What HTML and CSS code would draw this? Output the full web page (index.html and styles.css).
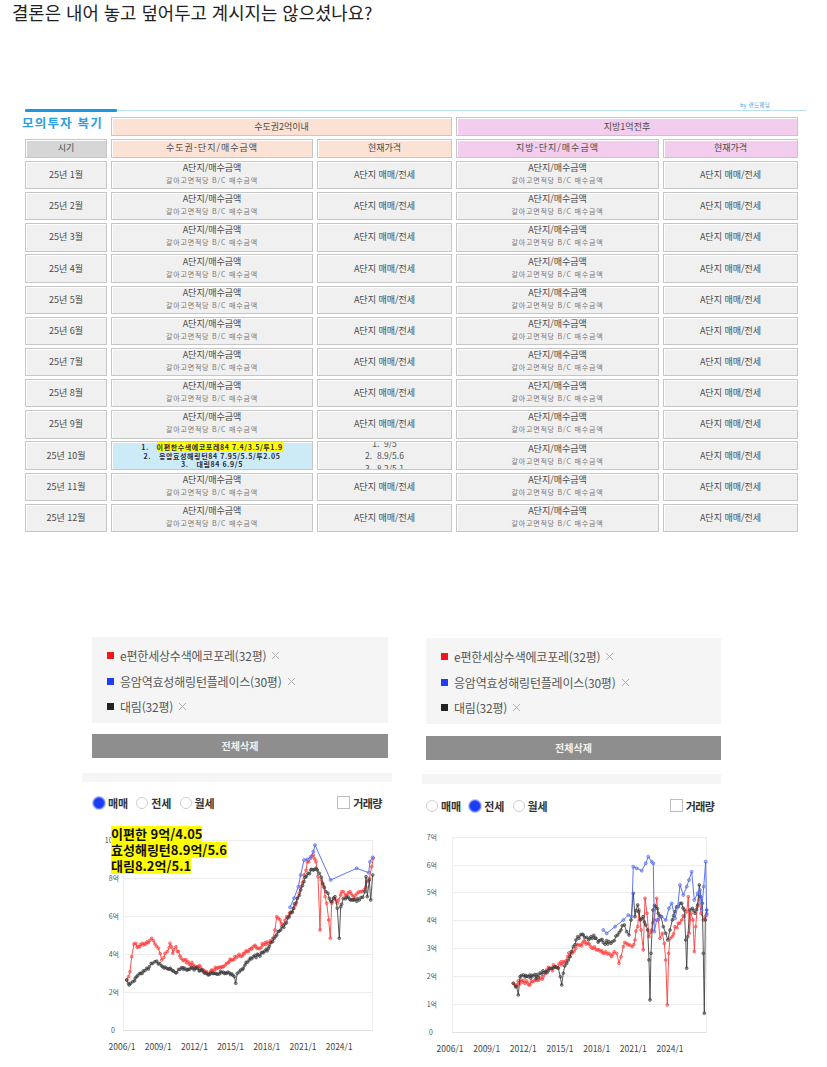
FILE: index.html
```html
<!DOCTYPE html>
<html lang="ko">
<head>
<meta charset="utf-8">
<title>모의투자 복기</title>
<link rel="stylesheet" href="styles.css">
</head>
<body>
<h1 class="title">결론은 내어 놓고 덮어두고 계시지는 않으셨나요?</h1>

<section class="sheet">
  <div class="sheet-top">
    <div class="credit">by 랜드웨딩</div>
    <div class="track"><span class="track-fill"></span><span class="track-rest"></span></div>
  </div>
  <div class="grid">
    <div class="sheet-label">모의투자 복기</div>
    <div class="cell head-a span2">수도권2억이내</div>
    <div class="cell head-b span2">지방1억전후</div>

    <div class="cell head-g">시기</div>
    <div class="cell head-a wide">수도권-단지/매수금액</div>
    <div class="cell head-a">현재가격</div>
    <div class="cell head-b wide">지방-단지/매수금액</div>
    <div class="cell head-b">현재가격</div>

    <div class="cell">25년 1월</div>
    <div class="cell pair"><span class="main">A단지/매수금액</span><span class="sub">갈아고면적당 B/C 매수금액</span></div>
    <div class="cell">A단지 매매/전세</div>
    <div class="cell pair"><span class="main">A단지/매수금액</span><span class="sub">갈아고면적당 B/C 매수금액</span></div>
    <div class="cell">A단지 매매/전세</div>

    <div class="cell">25년 2월</div>
    <div class="cell pair"><span class="main">A단지/매수금액</span><span class="sub">갈아고면적당 B/C 매수금액</span></div>
    <div class="cell">A단지 매매/전세</div>
    <div class="cell pair"><span class="main">A단지/매수금액</span><span class="sub">갈아고면적당 B/C 매수금액</span></div>
    <div class="cell">A단지 매매/전세</div>

    <div class="cell">25년 3월</div>
    <div class="cell pair"><span class="main">A단지/매수금액</span><span class="sub">갈아고면적당 B/C 매수금액</span></div>
    <div class="cell">A단지 매매/전세</div>
    <div class="cell pair"><span class="main">A단지/매수금액</span><span class="sub">갈아고면적당 B/C 매수금액</span></div>
    <div class="cell">A단지 매매/전세</div>

    <div class="cell">25년 4월</div>
    <div class="cell pair"><span class="main">A단지/매수금액</span><span class="sub">갈아고면적당 B/C 매수금액</span></div>
    <div class="cell">A단지 매매/전세</div>
    <div class="cell pair"><span class="main">A단지/매수금액</span><span class="sub">갈아고면적당 B/C 매수금액</span></div>
    <div class="cell">A단지 매매/전세</div>

    <div class="cell">25년 5월</div>
    <div class="cell pair"><span class="main">A단지/매수금액</span><span class="sub">갈아고면적당 B/C 매수금액</span></div>
    <div class="cell">A단지 매매/전세</div>
    <div class="cell pair"><span class="main">A단지/매수금액</span><span class="sub">갈아고면적당 B/C 매수금액</span></div>
    <div class="cell">A단지 매매/전세</div>

    <div class="cell">25년 6월</div>
    <div class="cell pair"><span class="main">A단지/매수금액</span><span class="sub">갈아고면적당 B/C 매수금액</span></div>
    <div class="cell">A단지 매매/전세</div>
    <div class="cell pair"><span class="main">A단지/매수금액</span><span class="sub">갈아고면적당 B/C 매수금액</span></div>
    <div class="cell">A단지 매매/전세</div>

    <div class="cell">25년 7월</div>
    <div class="cell pair"><span class="main">A단지/매수금액</span><span class="sub">갈아고면적당 B/C 매수금액</span></div>
    <div class="cell">A단지 매매/전세</div>
    <div class="cell pair"><span class="main">A단지/매수금액</span><span class="sub">갈아고면적당 B/C 매수금액</span></div>
    <div class="cell">A단지 매매/전세</div>

    <div class="cell">25년 8월</div>
    <div class="cell pair"><span class="main">A단지/매수금액</span><span class="sub">갈아고면적당 B/C 매수금액</span></div>
    <div class="cell">A단지 매매/전세</div>
    <div class="cell pair"><span class="main">A단지/매수금액</span><span class="sub">갈아고면적당 B/C 매수금액</span></div>
    <div class="cell">A단지 매매/전세</div>

    <div class="cell">25년 9월</div>
    <div class="cell pair"><span class="main">A단지/매수금액</span><span class="sub">갈아고면적당 B/C 매수금액</span></div>
    <div class="cell">A단지 매매/전세</div>
    <div class="cell pair"><span class="main">A단지/매수금액</span><span class="sub">갈아고면적당 B/C 매수금액</span></div>
    <div class="cell">A단지 매매/전세</div>

    <div class="cell">25년 10월</div>
    <div class="cell picked">
      <span class="pick-line">1.&nbsp;&nbsp;&nbsp;<mark>이편한수색에코포레84 7.4/3.5/투1.9</mark></span>
      <span class="pick-line">2.&nbsp;&nbsp;&nbsp;응암효성해링턴84 7.95/5.5/투2.05</span>
      <span class="pick-line">3.&nbsp;&nbsp;&nbsp;대림84 6.9/5</span>
    </div>
    <div class="cell prices">
      <span>1.&nbsp;&nbsp;9/5</span>
      <span>2.&nbsp;&nbsp;8.9/5.6</span>
      <span>3.&nbsp;&nbsp;8.2/5.1</span>
    </div>
    <div class="cell pair"><span class="main">A단지/매수금액</span><span class="sub">갈아고면적당 B/C 매수금액</span></div>
    <div class="cell">A단지 매매/전세</div>

    <div class="cell">25년 11월</div>
    <div class="cell pair"><span class="main">A단지/매수금액</span><span class="sub">갈아고면적당 B/C 매수금액</span></div>
    <div class="cell">A단지 매매/전세</div>
    <div class="cell pair"><span class="main">A단지/매수금액</span><span class="sub">갈아고면적당 B/C 매수금액</span></div>
    <div class="cell">A단지 매매/전세</div>

    <div class="cell">25년 12월</div>
    <div class="cell pair"><span class="main">A단지/매수금액</span><span class="sub">갈아고면적당 B/C 매수금액</span></div>
    <div class="cell">A단지 매매/전세</div>
    <div class="cell pair"><span class="main">A단지/매수금액</span><span class="sub">갈아고면적당 B/C 매수금액</span></div>
    <div class="cell">A단지 매매/전세</div>
  </div>
</section>

<section class="charts">
  <div class="panel panel-left">
    <div class="legend">
      <div class="legend-item"><span class="swatch red"></span>e편한세상수색에코포레(32평)<svg class="x" viewBox="0 0 9 9"><path d="M1 1L8 8M8 1L1 8"/></svg></div>
      <div class="legend-item"><span class="swatch blue"></span>응암역효성해링턴플레이스(30평)<svg class="x" viewBox="0 0 9 9"><path d="M1 1L8 8M8 1L1 8"/></svg></div>
      <div class="legend-item"><span class="swatch black"></span>대림(32평)<svg class="x" viewBox="0 0 9 9"><path d="M1 1L8 8M8 1L1 8"/></svg></div>
    </div>
    <button class="clear" type="button">전체삭제</button>
    <div class="strip"></div>
    <div class="options">
      <span class="opt"><span class="radio on"></span>매매</span>
      <span class="opt"><span class="radio"></span>전세</span>
      <span class="opt"><span class="radio"></span>월세</span>
      <span class="opt check"><span class="box"></span>거래량</span>
    </div>
    <div class="chart">
      <svg class="plot" id="plot-sale" width="310" height="244" viewBox="0 0 310 244">
        <g class="gridlines">
          <line x1="41" y1="22.5" x2="291" y2="22.5"/>
          <line x1="41" y1="60.5" x2="291" y2="60.5"/>
          <line x1="41" y1="98.5" x2="291" y2="98.5"/>
          <line x1="41" y1="136.5" x2="291" y2="136.5"/>
          <line x1="41" y1="174.5" x2="291" y2="174.5"/>
          <line x1="41.5" y1="22" x2="41.5" y2="212"/>
          <line x1="290.5" y1="22" x2="290.5" y2="212"/>
        </g>
        <line class="axis" x1="41" y1="212.5" x2="291" y2="212.5"/>
        <g class="ylab">
          <text x="37" y="24.5">10억</text>
          <text x="37" y="62.5">8억</text>
          <text x="37" y="100.5">6억</text>
          <text x="37" y="138.5">4억</text>
          <text x="37" y="176.5">2억</text>
          <text x="33" y="214.5">0</text>
        </g>
        <g class="xlab">
          <text x="40" y="232">2006/1</text>
          <text x="76.2" y="232">2009/1</text>
          <text x="112.4" y="232">2012/1</text>
          <text x="148.6" y="232">2015/1</text>
          <text x="184.8" y="232">2018/1</text>
          <text x="221" y="232">2021/1</text>
          <text x="257.2" y="232">2024/1</text>
        </g>
        <g class="series"></g>
      </svg>
      <div class="note">
        <span class="note-line"><span class="typo">이편한</span> 9억/4.05</span>
        <span class="note-line"><span class="typo">효성해링턴</span>8.9억/5.6</span>
        <span class="note-line">대림8.2억/5.1</span>
      </div>
    </div>
  </div>

  <div class="panel panel-right">
    <div class="legend">
      <div class="legend-item"><span class="swatch red"></span>e편한세상수색에코포레(32평)<svg class="x" viewBox="0 0 9 9"><path d="M1 1L8 8M8 1L1 8"/></svg></div>
      <div class="legend-item"><span class="swatch blue"></span>응암역효성해링턴플레이스(30평)<svg class="x" viewBox="0 0 9 9"><path d="M1 1L8 8M8 1L1 8"/></svg></div>
      <div class="legend-item"><span class="swatch black"></span>대림(32평)<svg class="x" viewBox="0 0 9 9"><path d="M1 1L8 8M8 1L1 8"/></svg></div>
    </div>
    <button class="clear" type="button">전체삭제</button>
    <div class="strip"></div>
    <div class="options">
      <span class="opt"><span class="radio"></span>매매</span>
      <span class="opt"><span class="radio on"></span>전세</span>
      <span class="opt"><span class="radio"></span>월세</span>
      <span class="opt check"><span class="box"></span>거래량</span>
    </div>
    <div class="chart">
      <svg class="plot" id="plot-rent" width="300" height="244" viewBox="0 0 300 244">
        <g class="gridlines">
          <line x1="31" y1="19.5" x2="286" y2="19.5"/>
          <line x1="31" y1="47.5" x2="286" y2="47.5"/>
          <line x1="31" y1="74.5" x2="286" y2="74.5"/>
          <line x1="31" y1="102.5" x2="286" y2="102.5"/>
          <line x1="31" y1="130.5" x2="286" y2="130.5"/>
          <line x1="31" y1="158.5" x2="286" y2="158.5"/>
          <line x1="31" y1="186.5" x2="286" y2="186.5"/>
          <line x1="31.5" y1="19" x2="31.5" y2="214"/>
          <line x1="285.5" y1="19" x2="285.5" y2="214"/>
        </g>
        <line class="axis" x1="31" y1="214.5" x2="286" y2="214.5"/>
        <g class="ylab">
          <text x="16" y="21.5">7억</text>
          <text x="16" y="49.5">6억</text>
          <text x="16" y="77">5억</text>
          <text x="16" y="105">4억</text>
          <text x="16" y="133">3억</text>
          <text x="16" y="160.5">2억</text>
          <text x="16" y="188.5">1억</text>
          <text x="12" y="216.5">0</text>
        </g>
        <g class="xlab">
          <text x="29" y="234">2006/1</text>
          <text x="65.7" y="234">2009/1</text>
          <text x="102.3" y="234">2012/1</text>
          <text x="139" y="234">2015/1</text>
          <text x="175.7" y="234">2018/1</text>
          <text x="212.3" y="234">2021/1</text>
          <text x="249" y="234">2024/1</text>
        </g>
        <g class="series"></g>
      </svg>
    </div>
  </div>
</section>

<script src="chart.js"></script>
</body>
</html>
```

FILE: styles.css
```css
* { box-sizing: border-box; }
html, body { margin: 0; padding: 0; }
body {
  width: 827px;
  height: 1067px;
  overflow: hidden;
  background: #fff;
  color: #333;
  font-family: "Noto Sans CJK KR", "Noto Sans", sans-serif;
}

.title {
  margin: 0;
  padding: 0 0 0 12px;
  font-size: 17.8px;
  font-weight: 400;
  line-height: 25px;
  color: #222;
}

/* ---------- sheet ---------- */
.sheet { margin-top: 77px; }
.sheet-top { width: 806px; padding-left: 25px; }
.credit {
  height: 7px;
  padding-right: 36px;
  text-align: right;
  font-size: 5.5px;
  line-height: 7px;
  letter-spacing: 0.3px;
  color: #3a9de0;
}
.track { display: flex; align-items: center; height: 3px; }
.track-fill { width: 92px; height: 3px; background: #1b98de; border-radius: 1px; }
.track-rest { flex: 1; height: 1.5px; background: #b9e3f7; }

.grid {
  display: grid;
  grid-template-columns: 82px 202px 135px 203px 135px;
  grid-template-rows: 19px 19.2px repeat(12, 28.4px);
  column-gap: 4px;
  row-gap: 2.8px;
  width: 773px;
  margin: 5px 0 0 25px;
}
.sheet-label {
  margin: -1px 0 0 -3px;
  font-size: 12.5px;
  font-weight: 700;
  line-height: 14px;
  letter-spacing: 1.2px;
  color: #2b9fe0;
  white-space: nowrap;
}
.cell {
  display: flex;
  flex-direction: column;
  align-items: center;
  justify-content: center;
  overflow: hidden;
  background: #f0f0f0;
  border: 1px solid #c6c6c6;
  box-shadow: inset 1px 1px 0 #fff;
  font-size: 9px;
  line-height: 12px;
  color: #4a4a4a;
  text-align: center;
  white-space: nowrap;
}
.span2 { grid-column: span 2; }
.head-a { background: #fce2d4; }
.head-b { background: #f2cdee; }
.head-g { background: #d6d6d6; }
.wide { letter-spacing: 1px; }

.pair { padding-bottom: 4px; }
.main { line-height: 12px; }
.sub {
  margin-top: 2px;
  font-size: 7px;
  line-height: 8px;
  letter-spacing: 0.8px;
  color: #777;
}

.picked { background: #cdeaf7; }
.pick-line {
  font-size: 7px;
  line-height: 8.3px;
  font-weight: 700;
  letter-spacing: 0.6px;
  color: #2a2a3a;
}
.pick-line mark { background: #ffff00; color: inherit; }

.prices {
  font-size: 8.5px;
  line-height: 12.5px;
  color: #555;
}

/* ---------- charts ---------- */
.charts { display: flex; align-items: flex-start; margin-top: 104.6px; }
.panel { display: flex; flex-direction: column; }
.panel-left { width: 310px; margin-left: 82px; }
.panel-right { width: 300px; margin-left: 29px; margin-top: 1px; }

.legend { height: 86px; padding: 6px 0 0 15px; background: #f5f5f5; }
.panel-left .legend, .panel-left .clear { width: 296px; margin-left: 10px; }
.panel-right .legend, .panel-right .clear { width: 295px; margin-left: 5px; }
.legend-item {
  display: flex;
  align-items: center;
  height: 25.5px;
  font-size: 12px;
  letter-spacing: -0.2px;
  color: #555;
  white-space: nowrap;
}
.swatch { flex: none; width: 7px; height: 7px; margin-right: 6px; }
.swatch.red { background: #f4141e; }
.swatch.blue { background: #1f3df2; }
.swatch.black { background: #232323; }
.x { flex: none; width: 9px; height: 9px; margin-left: 5px; fill: none; stroke: #b0b0b0; stroke-width: 1; }

.clear {
  display: block;
  height: 24px;
  margin-top: 11px;
  padding: 0;
  border: 0;
  background: #8e8e8e;
  color: #f2f2f2;
  font: 700 10px/24px "Noto Sans CJK KR", "Noto Sans", sans-serif;
}
.panel-right .clear { margin-top: 12px; }

.strip { height: 9px; margin-top: 15px; background: #f5f5f5; }
.panel-right .strip { height: 10px; margin-top: 14px; margin-left: 1px; }

.options {
  display: flex;
  align-items: center;
  height: 16px;
  margin-top: 13px;
  padding: 0 10px 0 11px;
  font-size: 11px;
  font-weight: 700;
  color: #333;
}
.panel-right .options { margin-top: 14px; padding: 0 6.5px 0 5px; }
.opt { display: flex; align-items: center; margin-right: 8px; white-space: nowrap; }
.opt.check { margin: 0 0 0 auto; letter-spacing: -0.5px; }
.radio {
  width: 12px;
  height: 12px;
  margin-right: 3px;
  border: 1px solid #cfcfcf;
  border-radius: 50%;
  background: #fff;
}
.radio.on { background: #1a3cf5; border-color: #5a72f6; box-shadow: 0 0 0 1px #b5c1fa; }
.box { width: 13px; height: 13px; margin-right: 3px; border: 1px solid #bdbdbd; background: #fff; }

.chart { position: relative; height: 244px; margin-top: 7px; }
.panel-right .chart { margin-top: 4px; }
.plot { display: block; }
.gridlines line { stroke: #ededed; stroke-width: 1; }
.axis { stroke: #e2e2e2; stroke-width: 1; }
.plot text { font-family: "Noto Sans CJK KR", "Noto Sans", sans-serif; fill: #555; }
.ylab text { font-size: 7px; text-anchor: end; }
.xlab text { font-size: 8.5px; text-anchor: middle; fill: #444; }

.line { fill: none; stroke-width: 1; stroke-linejoin: round; }
.line.red { stroke: #ff3434; stroke-opacity: 0.85; }
.line.black { stroke: #3a3a3a; stroke-opacity: 0.85; }
.line.blue { stroke: #4a66f2; stroke-opacity: 0.9; }
.dot { stroke-width: 0.6; fill-opacity: 0.5; }
.dot.red { fill: #ff5a5a; stroke: #ff3434; }
.dot.black { fill: #555; stroke: #333; }
.dot.blue { fill: #6d85f5; stroke: #4a66f2; }

.note {
  position: absolute;
  left: 29px;
  top: 8px;
  display: flex;
  flex-direction: column;
  align-items: flex-start;
}
.note-line {
  background: #ffff00;
  font-size: 13px;
  font-weight: 700;
  line-height: 16px;
  color: #111;
  white-space: nowrap;
}
.typo { text-decoration: underline wavy #e0602a; text-decoration-thickness: 1px; text-underline-offset: 2px; }
```

FILE: chart.js
```js
(function () {
  var NS = 'http://www.w3.org/2000/svg';

  function makeRand(seed) {
    return function () {
      seed = (seed + 0x6D2B79F5) | 0;
      var t = Math.imul(seed ^ (seed >>> 15), 1 | seed);
      t = (t + Math.imul(t ^ (t >>> 7), 61 | t)) ^ t;
      return ((t ^ (t >>> 14)) >>> 0) / 4294967296;
    };
  }

  // keys are sample points in 1/3-pixel units; off shifts them into the svg
  function densify(keys, off, step, noise, rand) {
    var pts = [];
    for (var i = 0; i < keys.length; i++) {
      var a = [keys[i][0] / 3 + off[0], keys[i][1] / 3 + off[1]];
      pts.push(a);
      if (i === keys.length - 1 || !step) continue;
      var b = [keys[i + 1][0] / 3 + off[0], keys[i + 1][1] / 3 + off[1]];
      var n = Math.floor((b[0] - a[0]) / step);
      for (var j = 1; j < n; j++) {
        var t = j / n;
        pts.push([
          a[0] + (b[0] - a[0]) * t + (rand() - 0.5) * step * 0.8,
          a[1] + (b[1] - a[1]) * t + (rand() - 0.5) * noise
        ]);
      }
    }
    return pts;
  }

  function draw(id, off, list) {
    var svg = document.getElementById(id);
    if (!svg) return;
    var g = svg.querySelector('.series');
    list.forEach(function (s, k) {
      var rand = makeRand(17 + k * 31 + id.length * 7);
      var pts = densify(s.keys, off, s.step, s.noise, rand);
      var line = document.createElementNS(NS, 'polyline');
      line.setAttribute('points', pts.map(function (p) {
        return p[0].toFixed(1) + ',' + p[1].toFixed(1);
      }).join(' '));
      line.setAttribute('class', 'line ' + s.cls);
      g.appendChild(line);
      pts.forEach(function (p) {
        var c = document.createElementNS(NS, 'circle');
        c.setAttribute('cx', p[0].toFixed(1));
        c.setAttribute('cy', p[1].toFixed(1));
        c.setAttribute('r', s.r || 1.4);
        c.setAttribute('class', 'dot ' + s.cls);
        g.appendChild(c);
      });
    });
  }

  var saleRed = [[140,480],[150,455],[155,410],[162,372],[175,380],[190,375],[205,368],[215,355],[225,372],[235,385],[245,420],[255,400],[262,395],[270,370],[278,400],[288,380],[300,408],[312,420],[325,425],[340,435],[355,440],[370,450],[382,462],[395,450],[410,445],[425,440],[440,430],[455,420],[470,412],[490,400],[505,395],[520,380],[535,385],[550,375],[565,370],[578,355],[585,330],[590,290],[600,300],[610,315],[620,290],[632,280],[642,265],[652,235],[662,200],[672,165],[682,125],[692,115],[700,105],[708,125],[714,170],[720,330],[724,180],[732,200],[740,250],[746,300],[751,355],[755,250],[762,235],[772,250],[782,225],[790,215],[800,225],[810,215],[822,240],[832,220],[842,215],[852,210],[860,185],[868,175],[875,140],[880,115]];
  var saleBlack = [[140,480],[148,495],[158,485],[170,470],[182,460],[195,452],[208,440],[218,430],[225,425],[235,432],[248,440],[260,445],[275,450],[290,458],[300,448],[315,445],[330,447],[345,445],[360,452],[372,458],[385,465],[398,460],[410,462],[425,458],[440,460],[455,462],[463,470],[467,490],[472,460],[482,450],[495,435],[508,420],[520,410],[535,405],[550,398],[565,385],[578,365],[590,345],[602,330],[615,312],[628,290],[640,265],[652,235],[662,210],[672,185],[684,160],[695,148],[708,145],[718,160],[728,190],[738,215],[748,235],[756,245],[765,230],[772,265],[778,355],[782,260],[790,235],[800,232],[812,240],[825,238],[838,240],[848,232],[855,215],[858,170],[862,230],[868,180],[872,240],[878,165]];
  var saleBlue = [[630,262],[642,235],[655,200],[662,165],[672,120],[682,118],[692,110],[700,95],[705,75],[752,180],[830,145],[866,158],[870,125],[878,112]];

  var rentBlack = [[295,490],[305,500],[310,525],[315,470],[325,465],[340,470],[355,468],[370,472],[380,462],[392,455],[400,452],[410,445],[420,440],[430,445],[436,470],[440,495],[445,460],[455,430],[465,410],[475,380],[483,360],[492,355],[505,345],[515,352],[528,350],[540,355],[552,362],[565,368],[578,372],[588,370],[598,362],[608,345],[618,330],[628,315],[635,335],[642,345],[648,300],[655,220],[660,290],[668,255],[676,300],[684,290],[692,315],[698,330],[702,420],[705,540],[708,400],[714,270],[722,260],[730,280],[738,290],[745,320],[752,340],[758,360],[765,330],[772,300],[780,275],[790,260],[800,250],[808,270],[812,360],[815,445],[818,350],[825,270],[832,265],[840,280],[848,255],[853,195],[857,230],[862,250],[865,400],[868,580],[871,300],[875,270]];
  var rentRed = [[295,490],[305,495],[318,480],[330,490],[345,495],[358,482],[372,480],[385,470],[395,450],[408,445],[420,440],[432,432],[445,425],[458,410],[470,400],[482,385],[495,375],[510,365],[522,372],[535,385],[548,390],[560,392],[572,395],[582,400],[590,410],[598,395],[605,400],[612,430],[618,410],[625,380],[635,370],[645,375],[652,380],[660,360],[668,320],[672,270],[678,330],[685,390],[690,235],[696,280],[702,350],[710,330],[718,300],[725,235],[730,300],[735,355],[742,340],[748,370],[752,420],[757,555],[761,400],[765,355],[772,350],[780,320],[790,310],[800,300],[808,290],[815,275],[820,230],[823,340],[828,280],[834,300],[838,395],[842,320],[847,260],[852,225],[858,280],[865,300],[870,290],[875,280]];
  var rentBlue = [[565,330],[575,340],[600,320],[625,300],[640,285],[650,290],[655,140],[665,145],[680,152],[692,130],[700,110],[710,125],[715,130],[718,335],[725,300],[740,290],[752,300],[762,265],[770,250],[780,295],[788,260],[795,195],[805,225],[815,200],[822,180],[830,155],[838,240],[848,220],[855,210],[860,270],[866,200],[872,125],[875,285]];

  draw('plot-sale', [-2, 2], [
    { cls: 'red', keys: saleRed, step: 1.2, noise: 4 },
    { cls: 'black', keys: saleBlack, step: 1.2, noise: 3.5 },
    { cls: 'blue', keys: saleBlue, step: 0, noise: 0, r: 1.5 }
  ]);
  draw('plot-rent', [-6, 2], [
    { cls: 'red', keys: rentRed, step: 1.2, noise: 6 },
    { cls: 'black', keys: rentBlack, step: 1.2, noise: 6 },
    { cls: 'blue', keys: rentBlue, step: 0, noise: 0, r: 1.5 }
  ]);
})();
```
